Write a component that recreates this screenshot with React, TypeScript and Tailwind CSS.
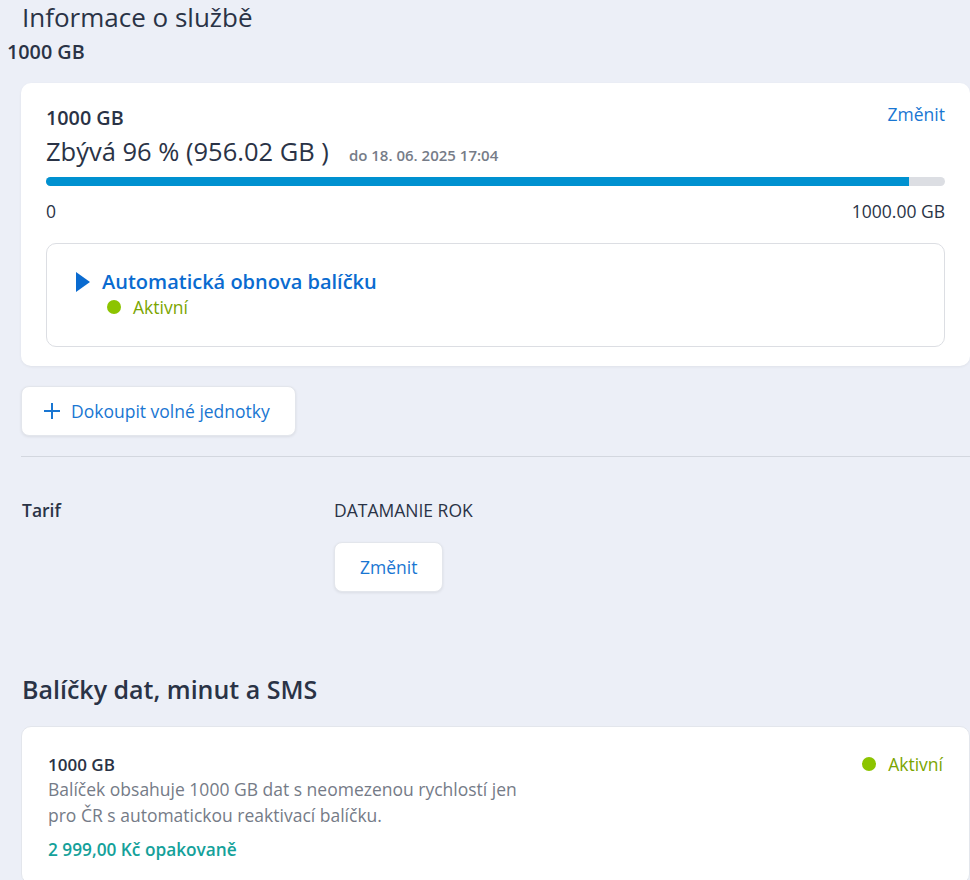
import React from 'react';

const Dot = () => <span className="inline-block w-[14px] h-[14px] rounded-full bg-[#8cc400]" />;

const App: React.FC = () => {
  const used = 96;
  return (
    <div className="min-h-[880px] bg-[#eceff7] text-[#2a3346] overflow-hidden" style={{ fontFamily: '"Open Sans", "Noto Sans", sans-serif' }}>
      <h1 className="pl-[22px] pt-[0px] text-[26px] leading-[34px] font-medium">Informace o službě</h1>
      <div className="pl-[7px] mt-[5px] text-[19.75px] leading-[26px] font-semibold">1000 GB</div>

      <div className="ml-[21px] mt-[18px] bg-white rounded-[10px] shadow-[0_1px_3px_rgba(0,0,0,0.06)] px-[25px] pt-[22px] pb-[19px]">
        <div className="flex justify-between items-start">
          <div>
            <div className="text-[19.75px] leading-[26px] font-semibold">1000 GB</div>
            <div className="flex items-baseline mt-[2px]">
              <span className="text-[25.5px] leading-[36px] font-medium">Zbývá 96 % (956.02 GB )</span>
              <span className="ml-[20px] text-[15px] font-semibold text-[#767c88]">do 18. 06. 2025 17:04</span>
            </div>
          </div>
          <a className="text-[17.5px] leading-[26px] text-[#1976d2] mt-[-4px]">Změnit</a>
        </div>
        <div className="mt-[8px] h-[9px] rounded-full bg-[#dcdee3] overflow-hidden">
          <div className="h-full bg-[#0091d0]" style={{ width: `${used}%` }} />
        </div>
        <div className="flex justify-between mt-[12px] text-[17.5px] leading-[26px]">
          <span>0</span>
          <span>1000.00 GB</span>
        </div>
        <div className="mt-[19px] border border-[#dcdee3] rounded-[10px] pl-[28px] pt-[24px] pb-[26px]">
          <div className="flex items-center">
            <svg width="16" height="22" viewBox="0 0 16 22" className="mr-[11px]">
              <path d="M1 1 L15 11 L1 21 Z" fill="#0a6bd0" />
            </svg>
            <span className="text-[20px] leading-[28px] font-semibold text-[#0a6bd0]">Automatická obnova balíčku</span>
          </div>
          <div className="flex items-center gap-[12px] ml-[32px] mt-[-2px]">
            <Dot />
            <span className="text-[17.5px] leading-[26px] text-[#7aa500]">Aktivní</span>
          </div>
        </div>
      </div>

      <div className="ml-[21px] mt-[20px] flex">
        <button className="flex items-center h-[50px] pl-[21px] pr-[25px] bg-white rounded-[8px] border border-[#e3e6ec] shadow-[0_1px_3px_rgba(0,0,0,0.08)] text-[17.5px] text-[#1976d2]">
          <svg width="18" height="18" viewBox="0 0 18 18" className="mr-[10px]">
            <path d="M9 1 V17 M1 9 H17" stroke="#1976d2" strokeWidth="2" />
          </svg>
          Dokoupit volné jednotky
        </button>
      </div>

      <div className="ml-[21px] mt-[20px] border-t border-[#d3d7df]" />

      <div className="ml-[22px] mt-[40px] grid grid-cols-[312px_1fr] text-[17.5px] leading-[26px]">
        <span className="font-semibold">Tarif</span>
        <div>
          <div>DATAMANIE ROK</div>
          <button className="mt-[19px] h-[50px] px-[25px] bg-white rounded-[8px] border border-[#e3e6ec] shadow-[0_1px_3px_rgba(0,0,0,0.08)] text-[17.5px] text-[#1976d2]">
            Změnit
          </button>
        </div>
      </div>

      <h2 className="pl-[22px] mt-[80px] text-[25px] leading-[34px] font-semibold">Balíčky dat, minut a SMS</h2>

      <div className="ml-[21px] mt-[20px] bg-white rounded-[10px] border border-[#e3e6ec] px-[26px] pt-[25px] pb-[20px]">
        <div className="flex justify-between items-start">
          <div className="max-w-[480px]">
            <div className="text-[17px] leading-[26px] font-semibold">1000 GB</div>
            <p className="mt-[-2px] text-[17.5px] leading-[26px] text-[#757b87]">
              Balíček obsahuje 1000 GB dat s neomezenou rychlostí jen pro ČR s automatickou reaktivací balíčku.
            </p>
            <div className="mt-[9px] text-[17.25px] leading-[26px] font-semibold text-[#14a19a]">2 999,00 Kč opakovaně</div>
          </div>
          <div className="flex items-center gap-[12px] mt-[-1px]">
            <Dot />
            <span className="text-[17.5px] leading-[26px] text-[#7aa500]">Aktivní</span>
          </div>
        </div>
      </div>
    </div>
  );
};

export default App;
